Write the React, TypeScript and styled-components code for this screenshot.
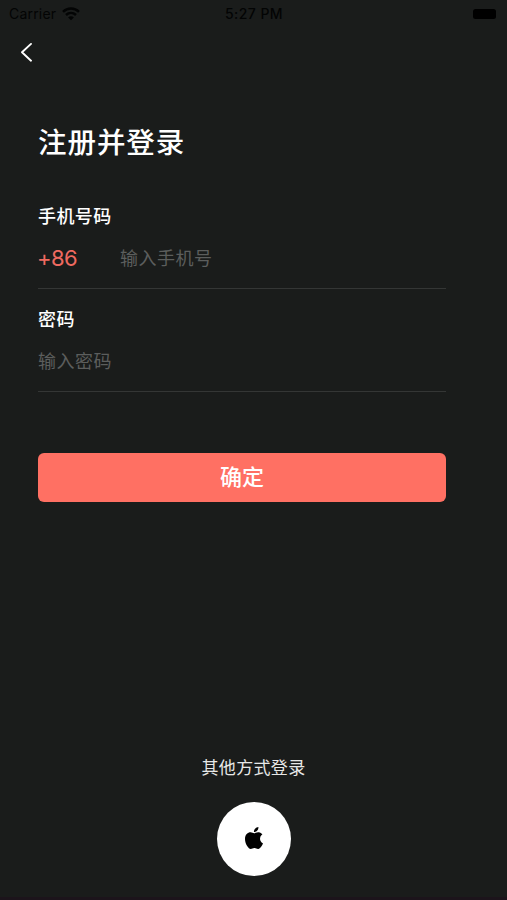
import React from "react";
import styled, { createGlobalStyle } from "styled-components";

const GlobalStyle = createGlobalStyle`
  *, *::before, *::after { box-sizing: border-box; }
  body {
    margin: 0;
    background: #1a1c1b;
    font-family: Inter, "Noto Sans CJK SC", sans-serif;
  }
`;

const Screen = styled.main`
  display: flex;
  flex-direction: column;
  height: 900px;
  width: 100%;
  max-width: 507px;
  overflow: hidden;
  background: #1a1c1b;
  border-bottom: 3px solid #1c141b;
  color: #fff;
`;

const StatusBar = styled.header`
  display: grid;
  grid-template-columns: 1fr auto 1fr;
  align-items: center;
  height: 27px;
  padding: 0 11px 0 9px;
  color: #030404;
  font-size: 14px;
  line-height: 27px;
`;

const Carrier = styled.div`
  display: flex;
  align-items: center;
  gap: 6px;
  letter-spacing: 0.2px;
`;

const Clock = styled.time`
  padding-left: 3px;
  font-weight: 500;
  font-size: 14px;
  letter-spacing: 0.45px;
`;

const Battery = styled.div`
  justify-self: end;
  width: 23px;
  height: 10px;
  border-radius: 2.5px;
  background: #000;
`;

const NavBar = styled.nav`
  display: flex;
  align-items: center;
  height: 50px;
  padding-left: 20px;
`;

const BackButton = styled.button`
  display: flex;
  padding: 0;
  border: 0;
  background: none;
  color: #fff;
`;

const Form = styled.form`
  display: flex;
  flex-direction: column;
  padding: 44px 61px 0 38px;
`;

const Title = styled.h1`
  margin: 0 0 32px;
  font-size: 28.5px;
  line-height: 44px;
  font-weight: 500;
  letter-spacing: 0.95px;
`;

const Field = styled.div`
  display: flex;
  flex-direction: column;
  height: 103px;

  & + & {
    margin-top: 0.4px;
  }
`;

const Label = styled.label`
  height: 38px;
  padding-top: 6px;
  font-size: 18px;
  line-height: 28px;
  font-weight: 500;
  letter-spacing: 0.4px;
`;

const InputRow = styled.div`
  display: flex;
  align-items: center;
  height: 54px;
  padding-bottom: 5px;
  border-bottom: 1px solid #343635;
`;

const CountryCode = styled.span`
  width: 83px;
  margin-left: -1px;
  padding-bottom: 3px;
  color: #ef6a60;
  font-size: 22px;
  line-height: 28px;
  letter-spacing: -0.6px;
`;

const Input = styled.input`
  flex: 1;
  min-width: 0;
  height: 30px;
  padding: 0;
  border: 0;
  outline: 0;
  background: none;
  color: #fff;
  font: 400 18px/30px Inter, "Noto Sans CJK SC", sans-serif;
  letter-spacing: 0.5px;

  &::placeholder {
    color: #5c5e5d;
    opacity: 1;
  }
`;

const SubmitButton = styled.button`
  height: 49px;
  margin-top: 49.6px;
  padding: 0;
  border: 0;
  border-radius: 6px;
  background: #ff7063;
  color: #fff;
  font: 500 22px/49px Inter, "Noto Sans CJK SC", sans-serif;
`;

const OtherLogin = styled.footer`
  display: flex;
  flex-direction: column;
  align-items: center;
  gap: 21px;
  margin-top: auto;
  padding-bottom: 21px;
`;

const OtherText = styled.span`
  color: #e7e8e7;
  font-size: 17px;
  line-height: 26px;
  letter-spacing: 0.35px;
`;

const AppleButton = styled.button`
  display: flex;
  align-items: center;
  justify-content: center;
  width: 74px;
  height: 74px;
  padding: 0 0 2px;
  border: 0;
  border-radius: 50%;
  background: #fff;
  color: #000;
`;

const WifiIcon = () => (
  <svg width="18" height="14" viewBox="0 0 18 14" fill="none" stroke="currentColor" strokeWidth="2.5">
    <path d="M1 4.9C5.5.5 12.5.5 17 4.9" />
    <path d="M4 8c2.9-2.7 7.1-2.7 10 0" />
    <path d="M9 13.3 6.1 10.4c1.7-1.5 4.1-1.5 5.8 0Z" fill="currentColor" stroke="none" />
  </svg>
);

const BackIcon = () => (
  <svg width="13" height="20" viewBox="0 0 13 20" fill="none" stroke="currentColor" strokeWidth="1.9" strokeLinecap="round" strokeLinejoin="round">
    <path d="M11 1.9 2 10.3l9 8.4" />
  </svg>
);

const AppleIcon = () => (
  <svg width="18" height="22" viewBox="0 0 814 1000" preserveAspectRatio="none" fill="currentColor">
    <path d="M788.1 340.9c-5.8 4.5-108.2 62.2-108.2 190.5 0 148.4 130.3 200.9 134.2 202.2-.6 3.2-20.7 71.9-68.7 141.9-42.8 61.6-87.5 123.1-155.5 123.1s-85.5-39.5-164-39.5c-76.5 0-103.700 40.800-165.900 40.800s-105.600-57-155.500-127C46.700 790.700 0 663 0 541.800c0-194.400 126.400-297.500 250.800-297.500 66.100 0 121.200 43.400 162.700 43.400 39.500 0 101.100-46 176.300-46 28.500 0 130.900 2.600 198.300 99.200zM554.100 159.400c31.100-36.900 53.100-88.100 53.100-139.300 0-7.100-.6-14.300-1.900-20.100-50.600 1.900-110.800 33.700-147.100 75.800-28.500 32.400-55.100 83.600-55.100 135.500 0 7.800 1.300 15.600 1.900 18.100 3.200.6 8.400 1.300 13.600 1.300 45.400 0 102.500-30.400 135.500-71.300z" />
  </svg>
);

export default function App() {
  return (
    <>
      <GlobalStyle />
      <Screen>
        <StatusBar>
          <Carrier>
            Carrier
            <WifiIcon />
          </Carrier>
          <Clock>5:27 PM</Clock>
          <Battery />
        </StatusBar>
        <NavBar>
          <BackButton type="button" aria-label="返回">
            <BackIcon />
          </BackButton>
        </NavBar>
        <Form>
          <Title>注册并登录</Title>
          <Field>
            <Label htmlFor="phone">手机号码</Label>
            <InputRow>
              <CountryCode>+86</CountryCode>
              <Input id="phone" type="tel" placeholder="输入手机号" />
            </InputRow>
          </Field>
          <Field>
            <Label htmlFor="password">密码</Label>
            <InputRow>
              <Input id="password" type="password" placeholder="输入密码" />
            </InputRow>
          </Field>
          <SubmitButton type="button">确定</SubmitButton>
        </Form>
        <OtherLogin>
          <OtherText>其他方式登录</OtherText>
          <AppleButton type="button" aria-label="Apple">
            <AppleIcon />
          </AppleButton>
        </OtherLogin>
      </Screen>
    </>
  );
}
